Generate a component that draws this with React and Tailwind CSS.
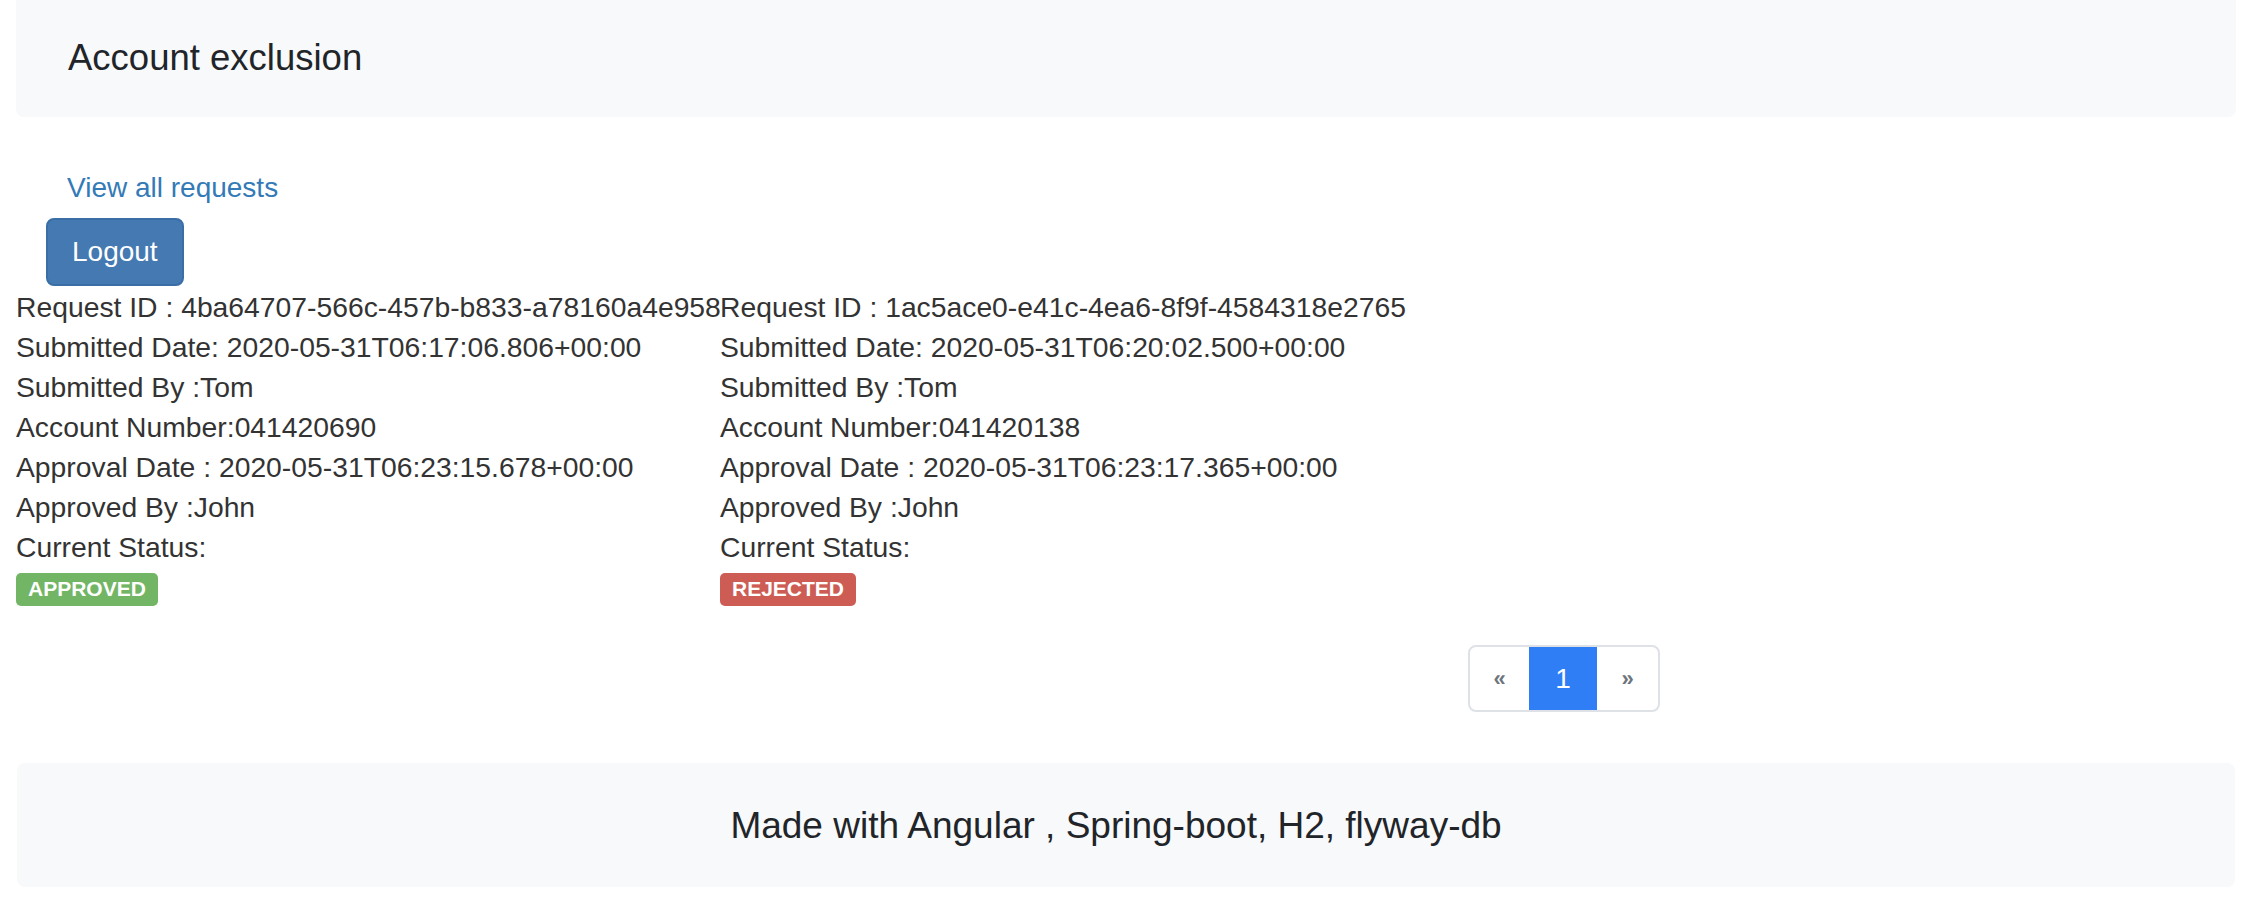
import React from "react";

const requests = [
  {
    id: "4ba64707-566c-457b-b833-a78160a4e958",
    submitted: "2020-05-31T06:17:06.806+00:00",
    by: "Tom",
    account: "041420690",
    approved: "2020-05-31T06:23:15.678+00:00",
    approver: "John",
    status: "APPROVED",
  },
  {
    id: "1ac5ace0-e41c-4ea6-8f9f-4584318e2765",
    submitted: "2020-05-31T06:20:02.500+00:00",
    by: "Tom",
    account: "041420138",
    approved: "2020-05-31T06:23:17.365+00:00",
    approver: "John",
    status: "REJECTED",
  },
];

const RequestCard = ({ req }) => {
  const badge =
    req.status === "APPROVED" ? "bg-[#72b565]" : "bg-[#cd5c54]";
  return (
    <div className="w-[704px] shrink-0 text-[28.3px] leading-[40px] text-[#333333] whitespace-nowrap">
      <div>Request ID : {req.id}</div>
      <div>Submitted Date: {req.submitted}</div>
      <div>Submitted By :{req.by}</div>
      <div>Account Number:{req.account}</div>
      <div>Approval Date : {req.approved}</div>
      <div>Approved By :{req.approver}</div>
      <div>Current Status:</div>
      <div className="pt-[6px] flex">
        <span
          className={`${badge} text-white font-bold text-[21px] leading-none px-[12px] pt-[5px] pb-[7px] rounded-[5px]`}
        >
          {req.status}
        </span>
      </div>
    </div>
  );
};

export default function App() {
  return (
    <div className="min-h-[900px] bg-white font-['Liberation_Sans',Arial,Helvetica,sans-serif] text-[#212529]">
      <header className="ml-[16px] mr-[8px] h-[117px] bg-[#f8f9fa] rounded-b-lg flex items-center pl-[52px] pb-[2px]">
        <h1 className="text-[36.5px] leading-[43px]">Account exclusion</h1>
      </header>

      <div className="pt-[51px] pl-[67px] text-[28px] leading-[40px]">
        <a href="#" className="text-[#337ab7]">
          View all requests
        </a>
      </div>

      <div className="pt-[10px] pl-[46px] flex">
        <button className="h-[68px] px-[24px] border-2 border-[#3a6ea6] bg-[#4479b1] text-white text-[28px] leading-[40px] rounded-lg">
          Logout
        </button>
      </div>

      <div className="flex pl-[16px] mt-[1px]">
        {requests.map((r) => (
          <RequestCard key={r.id} req={r} />
        ))}
      </div>

      <div className="pt-[39px] pl-[1468px] flex">
        <div className="flex h-[67px] border-2 border-[#dee2e6] rounded-lg overflow-hidden">
          <div className="w-[59px] flex items-center justify-center text-[#6c757d] text-[22px] font-bold">
            «
          </div>
          <div className="w-[68px] -my-[2px] flex items-center justify-center bg-[#2f7ef6] text-white text-[28px]">
            1
          </div>
          <div className="w-[61px] flex items-center justify-center text-[#6c757d] text-[22px] font-bold">
            »
          </div>
        </div>
      </div>

      <footer className="mt-[51px] ml-[17px] mr-[9px] h-[124px] bg-[#f8f9fa] rounded-lg flex items-center justify-center pr-[20px]">
        <p className="text-[37px] leading-[43px]">
          Made with Angular , Spring-boot, H2, flyway-db
        </p>
      </footer>
    </div>
  );
}
